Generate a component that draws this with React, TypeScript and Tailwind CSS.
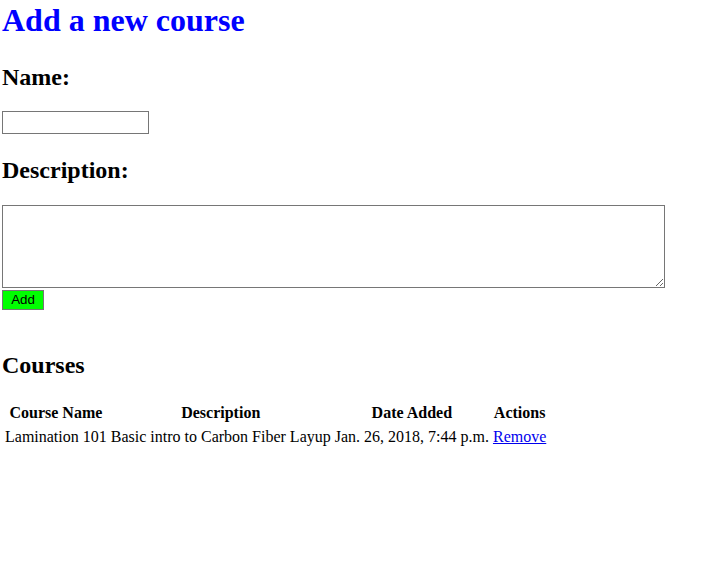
export default function App() {
  return (
    <div className="px-[2px] bg-white min-h-[578px] text-black" style={{ fontFamily: '"Liberation Serif", "Times New Roman", serif' }}>
      <h1 className="text-[32px] font-bold text-[#0000ff] leading-[37px] pt-[2px] m-0">Add a new course</h1>
      <h2 className="text-[24px] font-bold leading-[27px] mt-[25px] mb-[20px]">Name:</h2>
      <input type="text" className="block w-[147px] h-[23px] border border-[#767676] bg-white" />
      <h2 className="text-[24px] font-bold leading-[27px] mt-[23px] mb-[21px]">Description:</h2>
      <textarea className="block w-[663px] h-[83px] border border-[#767676] bg-white" />
      <button
        className="block mt-[2px] w-[42px] h-[20px] bg-[#00ff00] border border-[#767676] text-[13.33px] text-black leading-none"
        style={{ fontFamily: '"Liberation Sans", Arial, sans-serif' }}
      >
        Add
      </button>
      <h2 className="text-[24px] font-bold leading-[27px] mt-[42px] mb-[21px]">Courses</h2>
      <table className="border-separate border-spacing-[2px] text-[16px] leading-[20px]">
        <thead>
          <tr>
            <th className="p-[1px] font-bold text-center">Course Name</th>
            <th className="p-[1px] font-bold text-center">Description</th>
            <th className="p-[1px] font-bold text-center">Date Added</th>
            <th className="p-[1px] font-bold text-center">Actions</th>
          </tr>
        </thead>
        <tbody>
          <tr>
            <td className="p-[1px]">Lamination 101</td>
            <td className="p-[1px]">Basic intro to Carbon Fiber Layup</td>
            <td className="p-[1px]">Jan. 26, 2018, 7:44 p.m.</td>
            <td className="p-[1px]">
              <a href="#" className="text-[#0000ee] underline">Remove</a>
            </td>
          </tr>
        </tbody>
      </table>
    </div>
  );
}
